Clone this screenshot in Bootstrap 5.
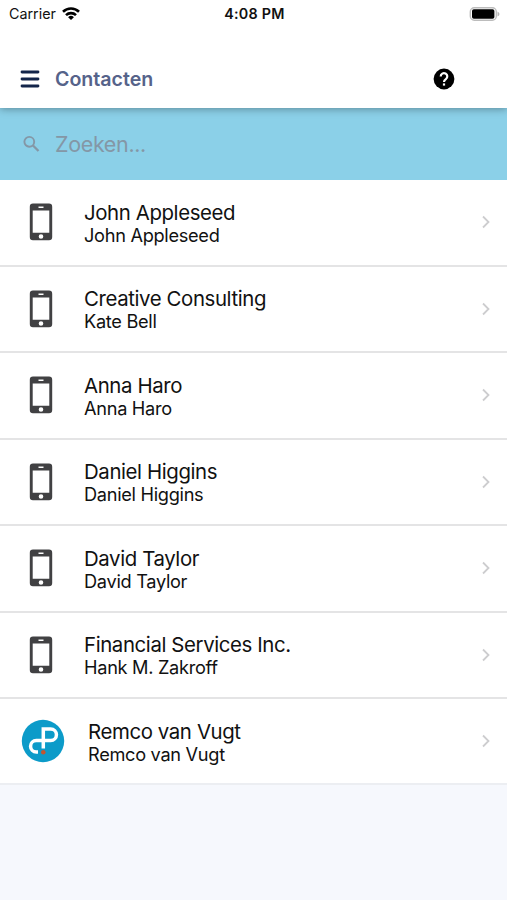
<!DOCTYPE html>
<html lang="nl">
<head>
<meta charset="utf-8">
<meta name="viewport" content="width=device-width, initial-scale=1">
<title>Contacten</title>
<link href="https://cdn.jsdelivr.net/npm/bootstrap@5.3.0/dist/css/bootstrap.min.css" rel="stylesheet">
<style>
body{font-family:Inter,"Liberation Sans",sans-serif;background:#f6f8fd;color:#111;height:900px;overflow:hidden}
.status-bar{height:28px;padding:0 7px 0 9px;font-size:14.3px;line-height:28px}
.status-side{width:90px}
.wifi{margin-left:6px}
.status-time{font-size:14.3px;font-weight:600;letter-spacing:.25px}
.title-bar{height:80px;padding:22px 52px 0 20px}
.app-head{z-index:2;box-shadow:0 1px 8px rgba(0,0,0,.35)}
.page-title{font-size:19.6px;font-weight:600;color:#56638a;line-height:24px;margin-left:15px}
.search-bar{height:72px;background:#8bd0e8;padding:0 22px}
.search-field,.search-field:focus{font-size:21.5px;color:#8497a6;padding:0;margin-left:14px;box-shadow:none;letter-spacing:-.35px}
.search-field::placeholder{color:#8497a6;opacity:1}
.contact{height:86.5px;border-bottom:2px solid #e4e4e5;padding:0 16px 0 29px;color:#111}
.contact:last-child{border-bottom-color:#eceef2;height:85.5px}
.contact-text{margin-left:31px;padding-top:1px}
.contact-logo{padding-left:21px}
.contact-logo .contact-text{margin-left:23px;padding-top:2px}
.contact-name{font-size:20.4px;line-height:25px;letter-spacing:-.39px}
.contact-sub{font-size:18.2px;line-height:21.5px;letter-spacing:-.3px}
</style>
</head>
<body>
<svg class="d-none" xmlns="http://www.w3.org/2000/svg">
  <symbol id="phone" viewBox="0 0 24 38"><path fill="#414143" fill-rule="evenodd" d="M4 .5h16a3.2 3.2 0 0 1 3.2 3.2V34a3.2 3.2 0 0 1-3.2 3.200H4A3.200 3.200 0 0 1 .8 34V3.700A3.200 3.200 0 0 1 4 .5zM3.700 7.500v22.200h16.600V7.500zM9.500 3.600v1.300h5V3.600zM12 31.200a2.300 2.300 0 1 0 0 4.600 2.300 2.300 0 0 0 0-4.600z"/></symbol>
  <symbol id="chevron" viewBox="0 0 10 14"><path d="M2 1.500 7.500 7 2 12.500" fill="none" stroke="#cdcdcf" stroke-width="1.800"/></symbol>
</svg>
<header class="app-head bg-white position-relative">
  <div class="status-bar d-flex justify-content-between align-items-center">
    <div class="status-side d-flex align-items-center"><span>Carrier</span>
      <svg class="wifi" width="18" height="14" viewBox="0 0 18 14" fill="none" stroke="#000" stroke-width="2.600"><path d="M1 4.700a11.500 11.500 0 0 1 16 0M4 8.100a7.200 7.200 0 0 1 10 0"/><path d="M9 13 6.100 10.200a4.200 4.200 0 0 1 5.800 0z" fill="#000" stroke="none"/></svg>
    </div>
    <div class="status-time">4:08 PM</div>
    <div class="status-side d-flex justify-content-end align-items-center"><svg width="31" height="15" viewBox="0 0 31 15"><rect x="1.300" y=".8" width="26" height="12.400" rx="4" fill="#fff" stroke="#bcbcbc" stroke-width="1.400"/><rect x="3" y="2.300" width="22.400" height="9.400" rx="1.800" fill="#000"/><path d="M28.500 4.600v5q2-1 2-2.500t-2-2.500z" fill="#b5b5b5"/></svg></div>
  </div>
  <div class="title-bar d-flex align-items-center">
    <svg width="20" height="18" viewBox="0 0 20 18" stroke="#13254a" stroke-width="2.800" stroke-linecap="round"><path d="M2 2h16M2 9h16M2 16h16"/></svg>
    <h1 class="page-title mb-0 flex-grow-1">Contacten</h1>
    <svg width="22" height="22" viewBox="0 0 22 22"><circle cx="11" cy="11" r="10.400"/><path d="M7.700 8.400a3.300 3.300 0 1 1 5.200 2.700C11.600 12 11 12.400 11 13.900" fill="none" stroke="#fff" stroke-width="2.200"/><rect x="9.900" y="15.400" width="2.200" height="2.200" fill="#fff"/></svg>
  </div>
</header>
<div class="search-bar d-flex align-items-center">
  <svg class="flex-shrink-0" width="19" height="19" viewBox="0 0 19 19" fill="none" stroke="#8497a6"><circle cx="7.300" cy="6.800" r="4.900" stroke-width="1.900"/><path d="m11 10.500 5.500 5.500" stroke-width="2.300"/></svg>
  <input class="search-field form-control border-0 bg-transparent" type="text" placeholder="Zoeken..." aria-label="Zoeken">
</div>
<main class="bg-white">
  <a href="#" class="contact d-flex align-items-center text-decoration-none"><svg width="24" height="38"><use href="#phone"/></svg><div class="contact-text flex-grow-1"><div class="contact-name">John Appleseed</div><div class="contact-sub">John Appleseed</div></div><svg width="10" height="14"><use href="#chevron"/></svg></a>
  <a href="#" class="contact d-flex align-items-center text-decoration-none"><svg width="24" height="38"><use href="#phone"/></svg><div class="contact-text flex-grow-1"><div class="contact-name">Creative Consulting</div><div class="contact-sub">Kate Bell</div></div><svg width="10" height="14"><use href="#chevron"/></svg></a>
  <a href="#" class="contact d-flex align-items-center text-decoration-none"><svg width="24" height="38"><use href="#phone"/></svg><div class="contact-text flex-grow-1"><div class="contact-name">Anna Haro</div><div class="contact-sub">Anna Haro</div></div><svg width="10" height="14"><use href="#chevron"/></svg></a>
  <a href="#" class="contact d-flex align-items-center text-decoration-none"><svg width="24" height="38"><use href="#phone"/></svg><div class="contact-text flex-grow-1"><div class="contact-name">Daniel Higgins</div><div class="contact-sub">Daniel Higgins</div></div><svg width="10" height="14"><use href="#chevron"/></svg></a>
  <a href="#" class="contact d-flex align-items-center text-decoration-none"><svg width="24" height="38"><use href="#phone"/></svg><div class="contact-text flex-grow-1"><div class="contact-name">David Taylor</div><div class="contact-sub">David Taylor</div></div><svg width="10" height="14"><use href="#chevron"/></svg></a>
  <a href="#" class="contact d-flex align-items-center text-decoration-none"><svg width="24" height="38"><use href="#phone"/></svg><div class="contact-text flex-grow-1"><div class="contact-name">Financial Services Inc.</div><div class="contact-sub">Hank M. Zakroff</div></div><svg width="10" height="14"><use href="#chevron"/></svg></a>
  <a href="#" class="contact contact-logo d-flex align-items-center text-decoration-none"><svg width="44" height="44" viewBox="0 0 44 44"><circle cx="22" cy="22" r="21.200" fill="#0c9bc9"/><path d="M22.300 29.500V10h7.400a5.500 5.500 0 0 1 0 11.500H15.300a5.700 5.700 0 0 0 0 11.500H17" fill="none" stroke="#fff" stroke-width="3.500"/><circle cx="22.300" cy="33.300" r="2.300" fill="#c4562f"/></svg><div class="contact-text flex-grow-1"><div class="contact-name">Remco van Vugt</div><div class="contact-sub">Remco van Vugt</div></div><svg width="10" height="14"><use href="#chevron"/></svg></a>
</main>
<script src="https://cdn.jsdelivr.net/npm/bootstrap@5.3.0/dist/js/bootstrap.bundle.min.js"></script>
</body>
</html>
